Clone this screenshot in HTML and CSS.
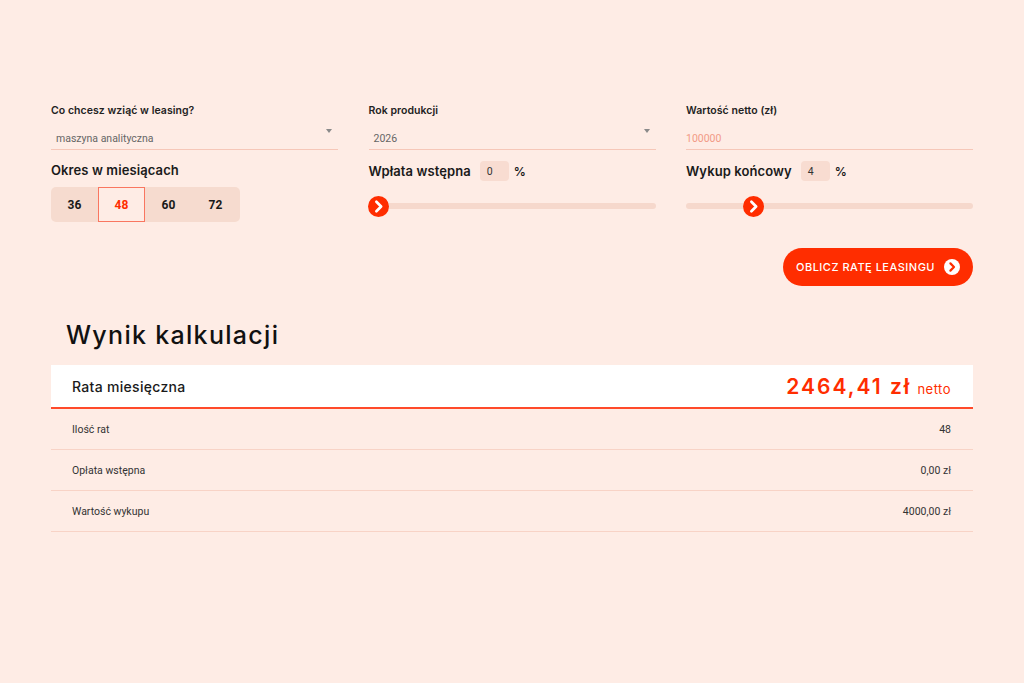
FILE: index.html
```html
<!DOCTYPE html>
<html lang="pl">
<head>
<meta charset="utf-8">
<title>Kalkulator leasingu</title>
<link rel="stylesheet" href="styles.css">
</head>
<body>
<div class="page">
  <div class="grid">
    <div class="col">
      <label class="lbl">Co chcesz wziąć w leasing?</label>
      <div class="select"><span>maszyna analityczna</span><span class="caret"></span></div>
      <div class="h3">Okres w miesiącach</div>
      <div class="months">
        <div class="m">36</div>
        <div class="m active">48</div>
        <div class="m">60</div>
        <div class="m">72</div>
      </div>
    </div>
    <div class="col">
      <label class="lbl">Rok produkcji</label>
      <div class="select"><span>2026</span><span class="caret"></span></div>
      <div class="pct-row"><span class="h3">Wpłata wstępna</span><span class="box">0</span><span class="pct">%</span></div>
      <div class="slider">
        <div class="thumb" style="left:-0.3%">
          <svg viewBox="0 0 20 20" width="21" height="21"><circle cx="10" cy="10" r="10" fill="#ff2d00"/><path d="M8 5.5 L12.5 10 L8 14.5" fill="none" stroke="#fff" stroke-width="2.6" stroke-linecap="round" stroke-linejoin="round"/></svg>
        </div>
      </div>
    </div>
    <div class="col">
      <label class="lbl">Wartość netto (zł)</label>
      <div class="select"><span class="ph">100000</span></div>
      <div class="pct-row"><span class="h3">Wykup końcowy</span><span class="box">4</span><span class="pct">%</span></div>
      <div class="slider">
        <div class="thumb" style="left:19.7%">
          <svg viewBox="0 0 20 20" width="21" height="21"><circle cx="10" cy="10" r="10" fill="#ff2d00"/><path d="M8 5.5 L12.5 10 L8 14.5" fill="none" stroke="#fff" stroke-width="2.6" stroke-linecap="round" stroke-linejoin="round"/></svg>
        </div>
      </div>
    </div>
  </div>
  <div class="actions">
    <button class="btn">OBLICZ RATĘ LEASINGU
      <svg viewBox="0 0 16 16" width="16" height="16"><circle cx="8" cy="8" r="8" fill="#fff"/><path d="M6.4 4.4 L10 8 L6.4 11.6" fill="none" stroke="#ff2d00" stroke-width="2.2" stroke-linecap="round" stroke-linejoin="round"/></svg>
    </button>
  </div>
  <h2 class="title">Wynik kalkulacji</h2>
  <div class="result">
    <div class="res-head">
      <span class="rh-l">Rata miesięczna</span>
      <span class="rh-r"><span class="amt">2464,41 zł</span> <span class="netto">netto</span></span>
    </div>
    <div class="row"><span>Ilość rat</span><span>48</span></div>
    <div class="row"><span>Opłata wstępna</span><span>0,00 zł</span></div>
    <div class="row"><span>Wartość wykupu</span><span>4000,00 zł</span></div>
  </div>
</div>
</body>
</html>
```
FILE: styles.css
```css
html, body {
  margin: 0;
  padding: 0;
  background: #feece5;
  font-family: "Inter", "Liberation Sans", sans-serif;
  color: #1a1a1a;
}
.page {
  width: 922px;
  margin: 0 auto;
  padding-top: 104px;
}
.grid {
  display: grid;
  grid-template-columns: 287px 287px 287px;
  column-gap: 30.5px;
}
.col {
  display: flex;
  flex-direction: column;
}
.lbl {
  font-size: 10.5px;
  font-weight: 600;
  color: #222;
  height: 14px;
  line-height: 14px;
  letter-spacing: 0.05px;
}
.select {
  margin-top: 9px;
  height: 22px;
  border-bottom: 1px solid #f6c7b8;
  display: flex;
  justify-content: space-between;
  align-items: center;
  padding: 0 6px 0 5px;
  font-size: 10.5px;
  color: #666;
  font-family: "Roboto", "Liberation Sans", sans-serif;
}
.select .ph { color: #f29a85; margin-left: -5px; }
.caret {
  width: 0; height: 0;
  border-left: 3px solid transparent;
  border-right: 3px solid transparent;
  border-top: 4px solid #8a8a8a;
  margin-top: -14px;
}
.h3 {
  font-size: 13px;
  font-weight: 600;
  color: #1a1a1a;
  letter-spacing: 0.1px;
}
.col > .h3 { margin-top: 12px; line-height: 17px; }
.months {
  margin-top: 8px;
  width: 189px;
  height: 35px;
  background: #f6dbcf;
  border-radius: 5px;
  display: flex;
}
.m {
  width: 47px;
  display: flex;
  align-items: center;
  justify-content: center;
  font-size: 12px;
  font-weight: 700;
  color: #1a1a1a;
  font-family: "Roboto", "Liberation Sans", sans-serif;
  box-sizing: border-box;
}
.m.active {
  color: #ff2d00;
  background: #feece5;
  border: 1.5px solid #f97660;
}
.pct-row {
  margin-top: 11px;
  display: flex;
  align-items: center;
  height: 20px;
}
.box {
  margin-left: 9px;
  width: 29px;
  height: 20px;
  border-radius: 4px;
  background: #f8dcd1;
  font-size: 10.5px;
  color: #333;
  font-family: "Roboto", "Liberation Sans", sans-serif;
  display: flex;
  align-items: center;
  padding-left: 7px;
  box-sizing: border-box;
}
.pct { margin-left: 5px; font-size: 12px; font-weight: 600; }
.slider {
  position: relative;
  margin-top: 22px;
  height: 6px;
  border-radius: 3px;
  background: #f6d8cc;
}
.thumb {
  position: absolute;
  top: -7.5px;
  width: 21px;
  height: 21px;
}
.thumb svg { display: block; }
.actions {
  display: flex;
  justify-content: flex-end;
  margin-top: 26px;
}
.btn {
  height: 38px;
  width: 190px;
  border: none;
  border-radius: 19px;
  background: #ff2d00;
  color: #fff;
  font-family: "Inter", "Liberation Sans", sans-serif;
  font-size: 11px;
  font-weight: 500;
  letter-spacing: 0.5px;
  display: flex;
  align-items: center;
  justify-content: center;
  gap: 9px;
  padding: 0;
}
.btn svg { display: block; }
.title {
  margin: 33px 0 0 15px;
  font-size: 25px;
  font-weight: 500;
  color: #111;
  line-height: 32px;
  letter-spacing: 1.3px;
}
.result { margin-top: 14px; }
.res-head {
  background: #fff;
  height: 42px;
  border-bottom: 2px solid #ff4a2a;
  display: flex;
  align-items: center;
  justify-content: space-between;
  padding: 0 22px 0 21px;
}
.rh-l { font-size: 14px; font-weight: 500; color: #1a1a1a; letter-spacing: 0.3px; }
.rh-r { color: #ff2d00; display: flex; align-items: baseline; gap: 6px; }
.amt { font-size: 21px; font-weight: 600; letter-spacing: 2px; }
.netto { font-size: 13px; letter-spacing: 0.5px; }
.row {
  height: 40px;
  border-bottom: 1px solid #f8d3c6;
  display: flex;
  align-items: center;
  justify-content: space-between;
  padding: 0 22px 0 21px;
  font-size: 10.5px;
  color: #333;
  font-family: "Roboto", "Liberation Sans", sans-serif;
}
```
